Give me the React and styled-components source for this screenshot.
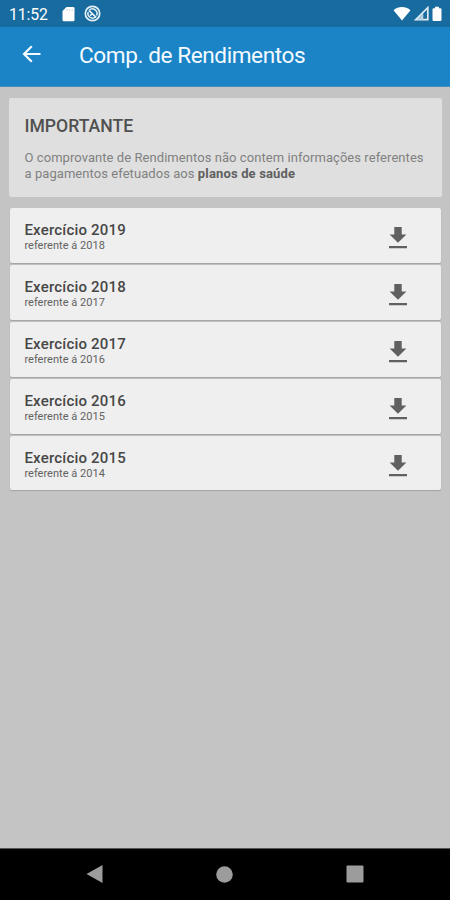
import React from "react";
import styled, { createGlobalStyle } from "styled-components";

const GlobalStyle = createGlobalStyle`
	* {
		box-sizing: border-box;
	}
	body {
		margin: 0;
		font-family: Roboto, "Liberation Sans", sans-serif;
	}
`;

const Screen = styled.div`
	display: flex;
	flex-direction: column;
	width: 450px;
	height: 900px;
	background-color: #c4c4c4;
	overflow: hidden;
`;

const StatusBar = styled.div`
	display: flex;
	align-items: center;
	height: 27px;
	padding: 0 8px 0 9px;
	background-color: #176b9f;
	color: #fff;
`;

const Clock = styled.span`
	width: 52.5px;
	padding-top: 2px;
	font-size: 15.8px;
	line-height: 18px;
	letter-spacing: -0.1px;
`;

const StatusIcons = styled.div`
	display: flex;
	align-items: center;
	gap: ${(props) => props.$gap};
	margin-left: ${(props) => (props.$end ? "auto" : "0")};

	svg {
		display: block;
	}
`;

const AppBar = styled.header`
	display: flex;
	align-items: center;
	height: 60px;
	padding: 0 22px 4px;
	background-color: #1b84c7;
	border-bottom: 1px solid #4590bf;
	color: #f4faff;
`;

const BackButton = styled.button`
	display: flex;
	width: 57px;
	margin-top: -2px;
	padding: 0;
	border: 0;
	background: none;
	color: inherit;
`;

const Title = styled.h1`
	margin: 0;
	padding-top: 2px;
	font-size: 22.6px;
	font-weight: 400;
	line-height: 28px;
	letter-spacing: -0.42px;
	white-space: nowrap;
`;

const Content = styled.main`
	flex: 1;
	padding: 11px 8.5px 0 9px;
`;

const Notice = styled.section`
	height: 99px;
	padding: 18px 15px 0 15.5px;
	border-radius: 2px;
	background-color: #dfdfdf;
`;

const NoticeTitle = styled.h2`
	margin: 0 0 13px;
	color: #505050;
	font-size: 17.6px;
	font-weight: 500;
	line-height: 21px;
	letter-spacing: 0;
`;

const NoticeText = styled.p`
	margin: 0;
	color: #818181;
	font-size: 13px;
	line-height: 15.5px;
	letter-spacing: 0.06px;
	white-space: nowrap;

	strong {
		color: #606060;
		font-weight: 700;
		letter-spacing: 0.15px;
	}
`;

const List = styled.ul`
	display: flex;
	flex-direction: column;
	gap: 2px;
	margin: 11px 1px 0 1.4px;
	padding: 0;
	list-style: none;
`;

const Row = styled.li`
	display: flex;
	align-items: center;
	justify-content: space-between;
	height: 54.9px;
	padding: 0 33.5px 0 14px;
	border-radius: 2px;
	background-color: #efefef;
	box-shadow: 0 1px 1px #a4a4a4, 0 0 1px #b4b4b4;
`;

const RowText = styled.div`
	display: flex;
	flex-direction: column;
	padding-top: 3px;
`;

const RowTitle = styled.span`
	color: #474747;
	font-size: 15px;
	font-weight: 500;
	line-height: 18px;
	letter-spacing: 0.2px;
`;

const RowSubtitle = styled.span`
	color: #626262;
	font-size: 11px;
	line-height: 13px;
	letter-spacing: 0.02px;
`;

const DownloadButton = styled.button`
	display: flex;
	padding: 5px 0 0;
	border: 0;
	background: none;
	color: #606060;
`;

const NavBar = styled.nav`
	display: flex;
	align-items: center;
	justify-content: space-between;
	height: 52px;
	padding: 0 86px 1px 86px;
	border-top: 1px solid #555;
	background-color: #000;
	color: #9c9c9c;
`;

const years = [2019, 2018, 2017, 2016, 2015];

const SdCardIcon = () => (
	<svg width='13' height='16' viewBox='0 0 13 16'>
		<path
			d='M4.500 1h6.7a1.3 1.3 0 0 1 1.3 1.3v11.7a1.3 1.3 0 0 1-1.3 1.3H1.8A1.3 1.3 0 0 1 .5 14V5z'
			fill='#fff'
		/>
		<path d='M5.200 3v2M7.700 3v2M10.200 3v2' stroke='#c4d7e3' strokeWidth='0.900' />
	</svg>
);

const SyncOffIcon = () => (
	<svg width='17' height='17' viewBox='0 0 17 17' fill='none' stroke='#e6f1f8'>
		<circle cx='8.500' cy='8.500' r='7.200' strokeWidth='1.700' />
		<path
			d='M5.300 5.200A4.600 4.600 0 0 1 12.600 10.500M11.500 12A4.600 4.600 0 0 1 4.200 7'
			strokeWidth='1.500'
		/>
		<path d='M4.800 5.400l7.400 7M6 10.600l3-2.200' strokeWidth='1.600' />
	</svg>
);

const WifiIcon = () => (
	<svg width='18' height='15' viewBox='0 0 18 15'>
		<path d='M.5 4.200C5.300-.2 12.700-.2 17.500 4.200L9 14.500z' fill='#fff' />
	</svg>
);

const SignalIcon = () => (
	<svg width='15' height='15' viewBox='0 0 15 15'>
		<path d='M1.800 13.700L13.800 1.700v12z' fill='none' stroke='#dfebf3' strokeWidth='1.700' />
		<path d='M3 13.700L9.300 7.200v6.500z' fill='#b5cfdf' />
	</svg>
);

const BatteryIcon = () => (
	<svg width='10' height='16' viewBox='0 0 10 16'>
		<path
			d='M3 .700h4v1.500h1.300a1.200 1.200 0 0 1 1.200 1.200v10.400a1.200 1.200 0 0 1-1.200 1.200H1.700a1.200 1.200 0 0 1-1.200-1.200V3.400a1.200 1.200 0 0 1 1.200-1.200H3z'
			fill='#fff'
		/>
	</svg>
);

const BackIcon = () => (
	<svg width='20' height='18' viewBox='0 0 20 18' fill='none'>
		<path d='M18.500 9H2M9.800 1.200L2 9l7.800 7.800' stroke='currentColor' strokeWidth='2.200' />
	</svg>
);

const DownloadIcon = () => (
	<svg width='18' height='22' viewBox='0 0 18 22' fill='currentColor'>
		<path d='M5.300 0h7.400v7.500h4.700L9 15.800.600 7.500h4.700zM0 19h18v2.200H0z' />
	</svg>
);

const App = () => {
	return (
		<>
			<GlobalStyle />
			<Screen>
				<StatusBar>
					<Clock>11:52</Clock>
					<StatusIcons $gap='9px'>
						<SdCardIcon />
						<SyncOffIcon />
					</StatusIcons>
					<StatusIcons $gap='3px' $end>
						<WifiIcon />
						<SignalIcon />
						<BatteryIcon />
					</StatusIcons>
				</StatusBar>
				<AppBar>
					<BackButton aria-label='Voltar'>
						<BackIcon />
					</BackButton>
					<Title>Comp. de Rendimentos</Title>
				</AppBar>
				<Content>
					<Notice>
						<NoticeTitle>IMPORTANTE</NoticeTitle>
						<NoticeText>
							O comprovante de Rendimentos não contem informações referentes
							<br />a pagamentos efetuados aos <strong>planos de saúde</strong>
						</NoticeText>
					</Notice>
					<List>
						{years.map((year) => (
							<Row key={year}>
								<RowText>
									<RowTitle>Exercício {year}</RowTitle>
									<RowSubtitle>referente á {year - 1}</RowSubtitle>
								</RowText>
								<DownloadButton aria-label='Baixar'>
									<DownloadIcon />
								</DownloadButton>
							</Row>
						))}
					</List>
				</Content>
				<NavBar>
					<svg width='17' height='18' viewBox='0 0 17 18'>
						<path d='M.5 9L16.500 0v18z' fill='currentColor' />
					</svg>
					<svg width='17' height='17' viewBox='0 0 17 17'>
						<circle cx='8.500' cy='8.500' r='8.300' fill='currentColor' />
					</svg>
					<svg width='18' height='18' viewBox='0 0 18 18'>
						<rect x='.5' y='.5' width='17' height='17' rx='1' fill='currentColor' />
					</svg>
				</NavBar>
			</Screen>
		</>
	);
};

export default App;
